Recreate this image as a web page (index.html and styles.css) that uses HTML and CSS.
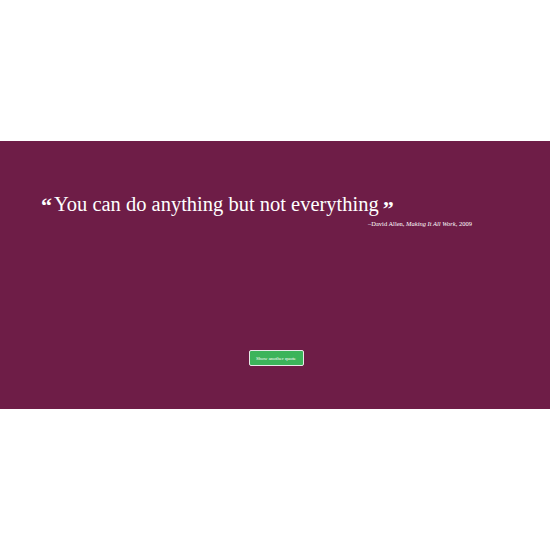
FILE: index.html
```html
<!DOCTYPE html>
<html>
<head>
<meta charset="utf-8">
<link rel="stylesheet" href="styles.css">
</head>
<body>
<div class="page">
  <section class="band">
    <div class="quote-box">
      <p class="quote"><span class="mark open">&#8220;</span>You can do anything but not everything<span class="mark close">&#8221;</span></p>
      <p class="cite">&#8211;David Allen, <em>Making It All Work</em>, 2009</p>
    </div>
    <div class="actions">
      <button class="btn">Show another quote</button>
    </div>
  </section>
</div>
</body>
</html>
```

FILE: styles.css
```css
html, body {
  margin: 0;
  padding: 0;
  background: #ffffff;
}
.page {
  padding-top: 141px;
}
.band {
  background: #6e1d47;
  height: 268px;
  display: flex;
  flex-direction: column;
  box-sizing: border-box;
  padding: 48px 78px 0 41px;
  font-family: "Liberation Serif", serif;
  color: #ffffff;
}
.quote-box {
  display: flex;
  flex-direction: column;
}
.quote {
  margin: 0;
  font-size: 20.5px;
  line-height: 30px;
}
.mark {
  font-weight: bold;
  font-size: 22px;
  line-height: 0;
  vertical-align: -2px;
}
.mark.open { margin-right: 2px; }
.mark.close { margin-left: 4px; vertical-align: -5px; }
.cite {
  margin: 1px 0 0 0;
  text-align: right;
  font-size: 6.5px;
  line-height: 8px;
}
.actions {
  display: flex;
  justify-content: center;
  padding-left: 39px;
  margin-top: 122px;
}
.btn {
  background: #3cb45a;
  border: 1px solid #e8e8e8;
  border-radius: 2px;
  color: #ffffff;
  font-family: "Liberation Serif", serif;
  font-size: 5px;
  white-space: nowrap;
  padding: 0 6px;
  height: 16px;
  width: 55px;
}
```
